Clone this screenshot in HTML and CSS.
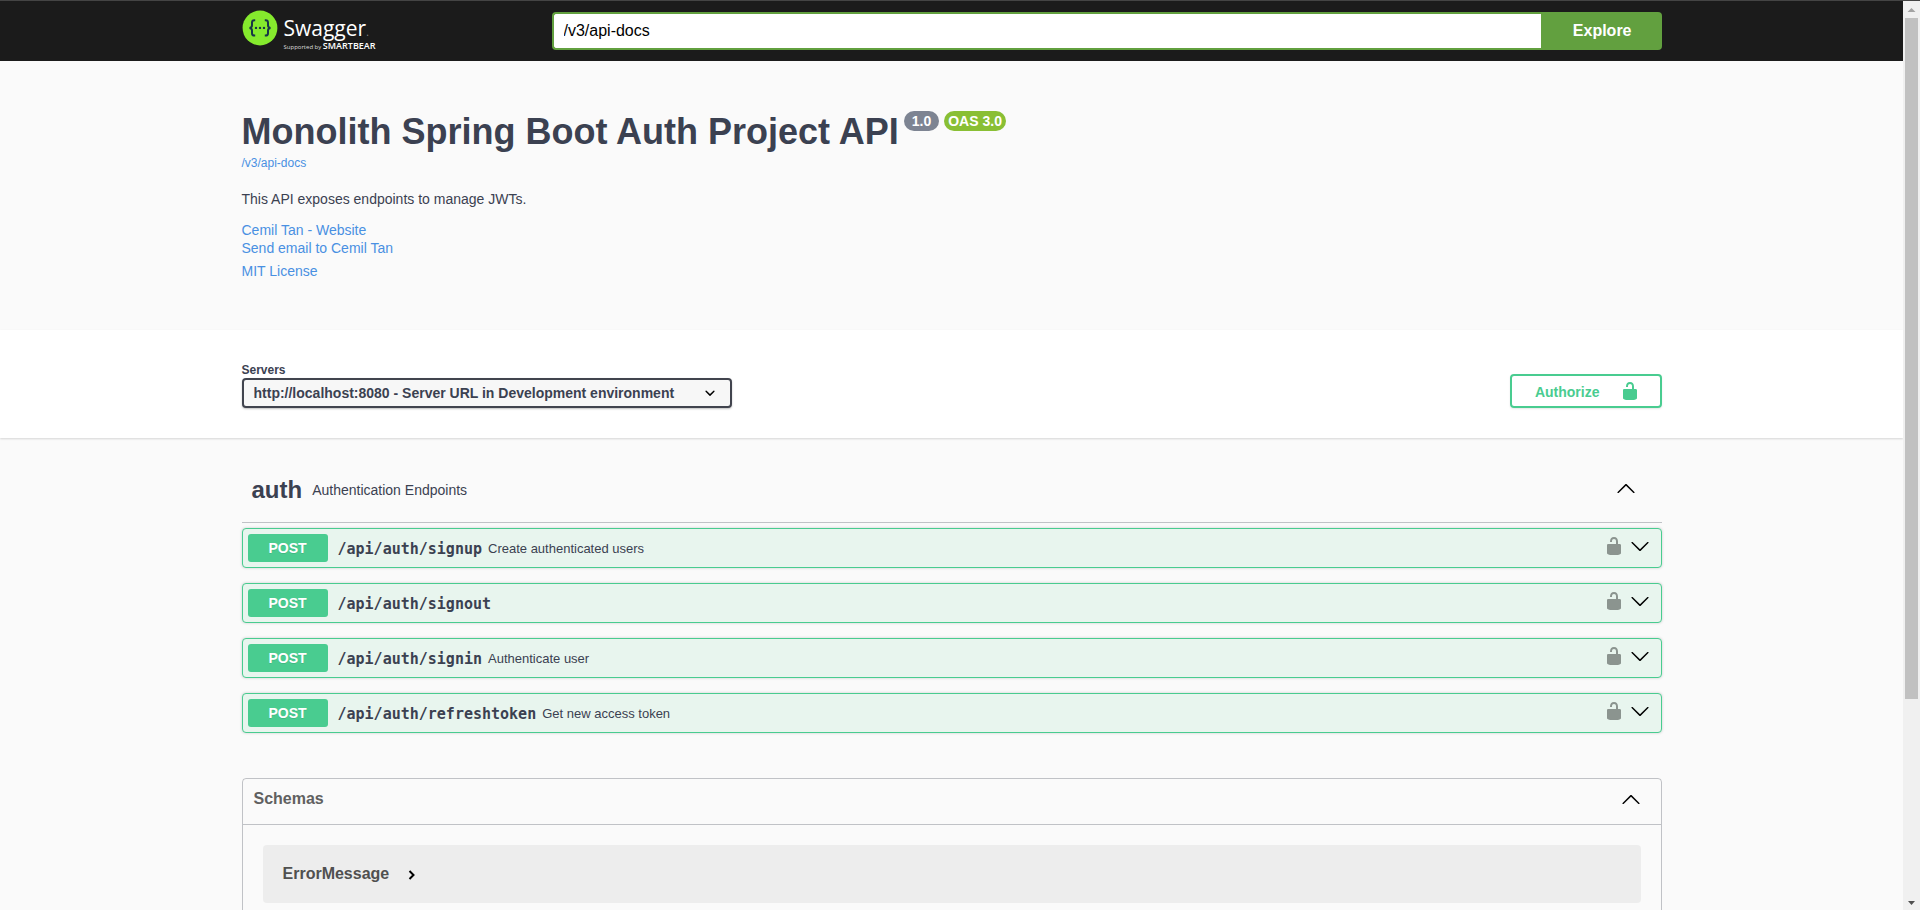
FILE: index.html
```html
<!DOCTYPE html>
<html lang="en">
<head>
<meta charset="utf-8">
<title>Swagger UI</title>
<link rel="stylesheet" href="styles.css">
</head>
<body>
<svg class="defs" aria-hidden="true">
  <symbol id="unlocked" viewBox="0 0 20 20"><path d="M15.8 8H14V5.6C14 2.703 12.665 1 10 1 7.334 1 6 2.703 6 5.6V6h2v-.801C8 3.754 8.797 3 10 3c1.203 0 2 .754 2 2.199V8H4c-.553 0-1 .646-1 1.199V17c0 .549.428 1.139.951 1.307l1.197.387C5.672 18.861 6.55 19 7.1 19h5.8c.549 0 1.428-.139 1.951-.307l1.196-.387c.524-.167.953-.757.953-1.306V9.199C17 8.646 16.352 8 15.8 8z"/></symbol>
  <symbol id="down" viewBox="0 0 20 20"><path d="M17.418 6.109c.272-.268.709-.268.979 0s.271.701 0 .969l-7.908 7.83c-.27.268-.707.268-.979 0l-7.908-7.83c-.27-.268-.27-.701 0-.969.271-.268.709-.268.979 0L10 13.25l7.418-7.141z"/></symbol>
  <symbol id="up" viewBox="0 0 20 20"><path d="M17.418 14.908c.272.268.709.268.979 0s.271-.701 0-.969l-7.908-7.83c-.27-.268-.707-.268-.979 0l-7.908 7.83c-.27.268-.27.701 0 .969.271.268.709.268.979 0L10 7.767l7.418 7.141z"/></symbol>
  <symbol id="caret" viewBox="0 0 20 20"><path d="M13.418 7.859a.695.695 0 0 1 .978 0 .68.68 0 0 1 0 .969l-3.908 3.83a.697.697 0 0 1-.979 0l-3.908-3.83a.68.68 0 0 1 0-.969.695.695 0 0 1 .978 0L10 11l3.418-3.141z"/></symbol>
</svg>
<div class="shell">
  <div class="page">
    <header class="topbar">
      <div class="wrapper topbar-row">
        <a class="logo" href="#">
          <svg class="logo-mark" viewBox="0 0 36 36" aria-hidden="true">
            <circle cx="18" cy="18" r="17.4" fill="#85ea2d"/>
            <g fill="none" stroke="#173647" stroke-width="2">
              <path d="M13.2 10.2h-.8c-1.800 0-2.400.9-2.400 2.400v2.600c0 1.700-.8 2.500-2.500 2.700 1.700.2 2.500 1 2.500 2.700v2.600c0 1.500.6 2.400 2.400 2.400h.8"/>
              <path d="M22.800 10.2h.8c1.800 0 2.400.9 2.400 2.400v2.600c0 1.700.8 2.500 2.500 2.700-1.700.2-2.500 1-2.500 2.700v2.600c0 1.500-.6 2.400-2.400 2.400h-.8"/>
            </g>
            <g fill="#173647"><circle cx="14" cy="17.900" r="1.200"/><circle cx="18" cy="17.900" r="1.200"/><circle cx="22" cy="17.900" r="1.200"/></g>
          </svg>
          <span class="logo-text">
            <span class="logo-name">Swagger<span class="logo-dot">.</span></span>
            <span class="logo-by">Supported by <b>SMARTBEAR</b></span>
          </span>
        </a>
        <form class="explore">
          <input class="explore-url" type="text" value="/v3/api-docs" aria-label="API definition URL">
          <button class="explore-btn" type="button">Explore</button>
        </form>
      </div>
    </header>

    <section class="wrapper info">
      <div class="title-row">
        <h1 class="title">Monolith Spring Boot Auth Project API</h1>
        <span class="badge version">1.0</span>
        <span class="badge oas">OAS 3.0</span>
      </div>
      <a class="docs-link" href="#">/v3/api-docs</a>
      <p class="description">This API exposes endpoints to manage JWTs.</p>
      <div class="contact">
        <a href="#">Cemil Tan - Website</a>
        <a href="#">Send email to Cemil Tan</a>
      </div>
      <a class="license" href="#">MIT License</a>
    </section>

    <section class="schemes">
      <div class="wrapper schemes-row">
        <div class="servers">
          <label class="servers-label" for="servers">Servers</label>
          <div class="select-box">
            <select id="servers" class="select"><option>http://localhost:8080 - Server URL in Development environment</option></select>
            <svg class="icon select-caret" aria-hidden="true"><use href="#caret"/></svg>
          </div>
        </div>
        <button class="authorize" type="button"><span>Authorize</span><svg class="icon" aria-hidden="true"><use href="#unlocked"/></svg></button>
      </div>
    </section>

    <main class="wrapper">
      <section class="tag">
        <div class="tag-head">
          <h2 class="tag-name">auth</h2>
          <span class="tag-text">Authentication Endpoints</span>
          <button class="icon-btn" type="button" aria-label="Collapse auth"><svg class="icon"><use href="#up"/></svg></button>
        </div>
        <div class="operations">
          <div class="op">
            <span class="method">POST</span><span class="path">/api/auth/signup</span><span class="summary">Create authenticated users</span>
            <button class="icon-btn lock" type="button" aria-label="Authorization"><svg class="icon"><use href="#unlocked"/></svg></button>
            <button class="icon-btn" type="button" aria-label="Expand"><svg class="icon"><use href="#down"/></svg></button>
          </div>
          <div class="op">
            <span class="method">POST</span><span class="path">/api/auth/signout</span><span class="summary"></span>
            <button class="icon-btn lock" type="button" aria-label="Authorization"><svg class="icon"><use href="#unlocked"/></svg></button>
            <button class="icon-btn" type="button" aria-label="Expand"><svg class="icon"><use href="#down"/></svg></button>
          </div>
          <div class="op">
            <span class="method">POST</span><span class="path">/api/auth/signin</span><span class="summary">Authenticate user</span>
            <button class="icon-btn lock" type="button" aria-label="Authorization"><svg class="icon"><use href="#unlocked"/></svg></button>
            <button class="icon-btn" type="button" aria-label="Expand"><svg class="icon"><use href="#down"/></svg></button>
          </div>
          <div class="op">
            <span class="method">POST</span><span class="path">/api/auth/refreshtoken</span><span class="summary">Get new access token</span>
            <button class="icon-btn lock" type="button" aria-label="Authorization"><svg class="icon"><use href="#unlocked"/></svg></button>
            <button class="icon-btn" type="button" aria-label="Expand"><svg class="icon"><use href="#down"/></svg></button>
          </div>
        </div>
      </section>

      <section class="models">
        <div class="models-head">
          <h2 class="models-title">Schemas</h2>
          <button class="icon-btn" type="button" aria-label="Collapse schemas"><svg class="icon"><use href="#up"/></svg></button>
        </div>
        <div class="models-body">
          <button class="model" type="button">
            <span>ErrorMessage</span>
            <svg class="model-caret" viewBox="0 0 8 12" aria-hidden="true"><path d="M1.500 2L5.500 6 1.500 10"/></svg>
          </button>
        </div>
      </section>
    </main>
  </div>
  <div class="scrollbar" aria-hidden="true">
    <svg class="scroll-arrow up" viewBox="0 0 17 17"><path d="M8.500 7L12.500 11H4.500z"/></svg>
    <div class="scroll-track"><div class="scroll-thumb"></div></div>
    <svg class="scroll-arrow" viewBox="0 0 17 17"><path d="M5 8h7l-3.500 4z"/></svg>
  </div>
</div>
</body>
</html>
```
FILE: styles.css
```css
* { box-sizing: border-box; }

body {
  margin: 0;
  background: #fafafa;
  color: #3b4151;
  font-family: "Liberation Sans", Arial, sans-serif;
  font-size: 14px;
}

h1, h2, p { margin: 0; }
button { font-family: inherit; cursor: pointer; }
a { color: #4990e2; text-decoration: none; }

.defs { position: absolute; width: 0; height: 0; }

.shell {
  display: flex;
  height: 100vh;
  overflow: hidden;
  border-top: 1px solid #444;
}

.page { flex: 1; min-width: 0; overflow: hidden; }

.wrapper {
  width: 100%;
  max-width: 1460px;
  margin: 0 auto;
  padding: 0 20px;
}

.icon { display: block; width: 20px; height: 20px; fill: currentColor; }

.icon-btn {
  padding: 0;
  border: 0;
  background: none;
  color: #000;
}

/* Top bar */
.topbar { background: #1b1b1b; }

.topbar-row {
  display: flex;
  align-items: flex-start;
  padding-top: 11px;
  padding-bottom: 11px;
}

.logo {
  display: flex;
  gap: 6px;
  width: 310px;
  height: 38px;
  color: #fff;
  font-family: "Open Sans", "Noto Sans", sans-serif;
}

.logo-mark { width: 36px; height: 36px; margin-top: -2px; }
.logo-text { display: flex; flex-direction: column; padding-top: 3px; }
.logo-name { font-size: 21px; line-height: 26px; }
.logo-dot { font-size: 10px; color: #888; }
.logo-by { margin-top: -4px; font-size: 6px; line-height: 9px; color: #ddd; white-space: nowrap; }
.logo-by b { font-size: 9px; font-weight: 600; color: #fff; }

.explore { display: flex; flex: 1; height: 38px; }

.explore-url {
  flex: 1;
  min-width: 0;
  padding: 0 10px;
  border: 2px solid #62a03f;
  border-right: 0;
  border-radius: 4px 0 0 4px;
  background: #fff;
  color: #000;
  font-family: inherit;
  font-size: 16px;
}

.explore-btn {
  padding: 0 30px 0 32px;
  border: 0;
  border-radius: 0 4px 4px 0;
  background: #62a03f;
  color: #fff;
  font-size: 16px;
  font-weight: 700;
}

/* API description */
.info {
  display: flex;
  flex-direction: column;
  align-items: flex-start;
  padding-top: 50px;
  padding-bottom: 50px;
}

.title-row { display: flex; align-items: flex-start; gap: 5px; }
.title { font-size: 36px; line-height: 41px; }

.badge {
  padding: 2px 4px;
  border-radius: 20px;
  color: #fff;
  font-size: 14px;
  font-weight: 700;
  line-height: 16px;
}

.version { padding: 2px 8px; background: #7d8492; }
.oas { background: #89bf34; }

.docs-link { margin-top: 4px; font-size: 12px; line-height: 14px; }
.description { margin-top: 20px; line-height: 18px; }
.contact { display: flex; flex-direction: column; margin-top: 13px; line-height: 18px; }
.license { margin-top: 5px; line-height: 18px; }

/* Servers and authorization */
.schemes {
  padding: 30px 0;
  background: #fff;
  box-shadow: 0 1px 2px rgba(0, 0, 0, .15);
}

.schemes-row {
  display: flex;
  align-items: flex-end;
  justify-content: space-between;
}

.servers { display: flex; flex-direction: column; }

.servers-label { padding-top: 2px; font-size: 12px; font-weight: 700; line-height: 16px; }
.select-box { position: relative; }

.select {
  display: block;
  width: 490px;
  height: 30px;
  padding: 0 40px 0 10px;
  border: 2px solid #41444e;
  border-radius: 4px;
  appearance: none;
  background: #f7f7f7;
  box-shadow: 0 1px 2px rgba(0, 0, 0, .25);
  color: #3b4151;
  font-family: inherit;
  font-size: 14px;
  font-weight: 700;
}

.select-caret {
  position: absolute;
  top: 5px;
  right: 12px;
  color: #000;
  pointer-events: none;
}

.authorize {
  display: flex;
  align-items: center;
  gap: 20px;
  height: 34px;
  padding: 0 20px 0 23px;
  border: 2px solid #49cc90;
  border-radius: 4px;
  background: none;
  box-shadow: 0 1px 2px rgba(0, 0, 0, .1);
  color: #49cc90;
  font-size: 14px;
  font-weight: 700;
}

.authorize span { padding-top: 2px; }

/* Operations */
.tag { padding-top: 30px; }

.tag-head {
  display: flex;
  align-items: center;
  padding: 10px 26px 20px 10px;
  border-bottom: 1px solid rgba(59, 65, 81, .3);
}

.tag-name { font-size: 24px; line-height: 24px; }
.tag-text { flex: 1; padding-left: 10px; }
.tag-head .icon-btn { padding-bottom: 4px; }

.operations { display: flex; flex-direction: column; gap: 15px; padding-top: 5px; }

.op {
  display: flex;
  align-items: center;
  height: 40px;
  padding: 5px;
  padding-right: 11px;
  border: 1px solid #49cc90;
  border-radius: 4px;
  background: #e8f5ee;
  box-shadow: 0 0 3px rgba(0, 0, 0, .19);
}

.method {
  width: 80px;
  border-radius: 3px;
  background: #49cc90;
  color: #fff;
  font-weight: 700;
  line-height: 28px;
  text-align: center;
  text-shadow: 0 1px 0 rgba(0, 0, 0, .1);
}

.path {
  padding: 2px 6px 0 10px;
  font-family: "DejaVu Sans Mono", monospace;
  font-size: 15px;
  font-weight: 700;
}

.summary { flex: 1; font-size: 13px; }

.op .icon-btn { padding-bottom: 4px; }
.op .lock { margin-right: 6px; color: #8b948f; }

/* Schemas */
.models {
  margin: 45px 0 30px;
  border: 1px solid rgba(59, 65, 81, .3);
  border-radius: 4px;
}

.models-head {
  display: flex;
  align-items: center;
  justify-content: space-between;
  padding: 10px 20px 15px 11px;
  border-bottom: 1px solid rgba(59, 65, 81, .3);
}

.models-title { color: #606060; font-size: 16px; line-height: 20px; }

.models-body { padding: 20px; }

.model {
  display: flex;
  align-items: center;
  gap: 19px;
  width: 100%;
  height: 58px;
  padding: 0 20px;
  border: 0;
  border-radius: 4px;
  background: #ededed;
  color: #505050;
  font-size: 16px;
  font-weight: 700;
}

.model-caret { width: 8px; height: 12px; margin-top: 2px; fill: none; stroke: #000; stroke-width: 2; }

/* Page scrollbar */
.scrollbar {
  display: flex;
  flex-direction: column;
  width: 17px;
  background: #f0f0f0;
}

.scroll-arrow { width: 17px; height: 17px; fill: #505050; }
.scroll-arrow.up { fill: #a3a3a3; }
.scroll-track { flex: 1; padding: 0 2px; }
.scroll-thumb { height: calc(100% * 7 / 9); background: #c1c1c1; }
```
